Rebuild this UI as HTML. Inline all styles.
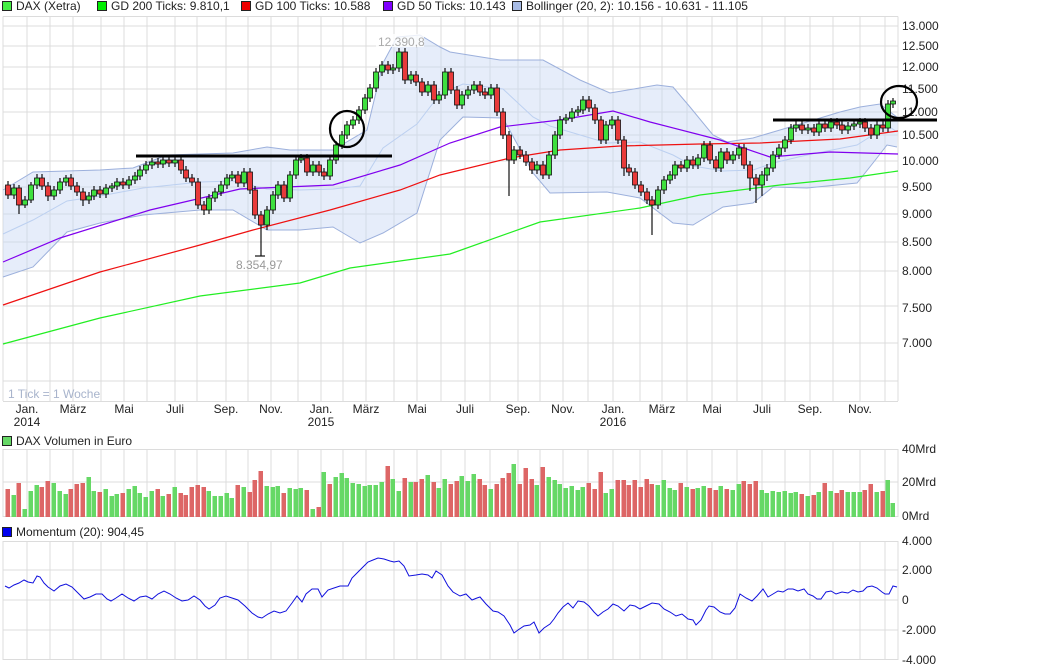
<!DOCTYPE html>
<html><head><meta charset="utf-8">
<style>
html,body{margin:0;padding:0;background:#fff;width:1054px;height:670px;overflow:hidden}
svg{display:block}
text{font-family:"Liberation Sans",sans-serif;font-size:12px;fill:#222}
.g{fill:#3ee03e;stroke:#111;stroke-width:.8}
.r{fill:#e83a3a;stroke:#111;stroke-width:.8}
.vg{fill:#66d866}.vr{fill:#dd6666}
</style></head><body>
<svg width="1054" height="670" viewBox="0 0 1054 670" xmlns="http://www.w3.org/2000/svg">
<defs>
<path id="vg" d="M3 0V1M27 0V1M50 0V1M73 0V1M101 0V1M124 0V1M147 0V1M175 0V1M197 0V1M226 0V1M248 0V1M271 0V1M298 0V1M321 0V1M343 0V1M366 0V1M394 0V1M417 0V1M441 0V1M465 0V1M490 0V1M518 0V1M540 0V1M563 0V1M588 0V1M613 0V1M640 0V1M662 0V1M687 0V1M712 0V1M737 0V1M762 0V1M785 0V1M810 0V1M833 0V1M860 0V1M885 0V1M898 0V1" stroke="#dcdcdc" stroke-width="1" vector-effect="non-scaling-stroke" fill="none"/>
</defs>
<!-- legend -->
<rect x="2.5" y="1.5" width="9" height="9" fill="#44ee44" stroke="#222"/><text x="16" y="10">DAX (Xetra)</text>
<rect x="97.5" y="1.5" width="9" height="9" fill="#00ee00" stroke="#222"/><text x="111" y="10">GD 200 Ticks: 9.810,1</text>
<rect x="241.5" y="1.5" width="9" height="9" fill="#ee0000" stroke="#222"/><text x="255" y="10">GD 100 Ticks: 10.588</text>
<rect x="383.5" y="1.5" width="9" height="9" fill="#8000ff" stroke="#222"/><text x="397" y="10">GD 50 Ticks: 10.143</text>
<rect x="512.5" y="1.5" width="9" height="9" fill="#a8bce6" stroke="#222"/><text x="526" y="10">Bollinger (20, 2): 10.156 - 10.631 - 11.105</text>

<!-- main grid -->
<use href="#vg" transform="translate(0,16.5) scale(1,384.5)"/>
<path d="M3 16.5H898M3 26H898M3 46H898M3 67H898M3 89H898M3 112H898M3 135H898M3 161H898M3 187H898M3 214H898M3 242H898M3 271H898M3 306H898M3 343H898M3 381H898M3 401.5H898" stroke="#dcdcdc" fill="none"/>
<g>
<text x="902" y="30">13.000</text><text x="902" y="50">12.500</text><text x="902" y="71">12.000</text><text x="902" y="93">11.500</text><text x="902" y="116">11.000</text><text x="902" y="139">10.500</text><text x="902" y="165">10.000</text><text x="902" y="191">9.500</text><text x="902" y="218">9.000</text><text x="902" y="246">8.500</text><text x="902" y="275">8.000</text><text x="902" y="312">7.500</text><text x="902" y="347">7.000</text>
</g>
<!-- bollinger -->
<polygon points="3,190 33,172 100,170 133,168 167,155 233,153 267,147 290,150 333,150 367,130 383,63 397,37 420,35 440,47 450,52 500,60 543,60 580,80 610,93 657,85 673,87 690,107 713,135 727,142 753,138 807,122 840,112 860,107 880,104 898,118 897,147 887,145 873,163 857,183 807,188 773,187 753,203 723,207 693,225 673,223 640,198 607,192 550,193 533,173 503,118 463,117 440,140 417,213 383,233 360,243 333,227 300,230 267,230 233,210 200,210 143,215 100,223 67,232 33,267 3,277" fill="rgba(200,216,245,0.45)" stroke="none"/>
<polyline points="3,190 33,172 100,170 133,168 167,155 233,153 267,147 290,150 333,150 367,130 383,63 397,37 420,35 440,47 450,52 500,60 543,60 580,80 610,93 657,85 673,87 690,107 713,135 727,142 753,138 807,122 840,112 860,107 880,104 898,118" fill="none" stroke="#9cb0dc"/>
<polyline points="3,277 33,267 67,232 100,223 143,215 200,210 233,210 267,230 300,230 333,227 360,243 383,233 417,213 440,140 463,117 503,118 533,173 550,193 607,192 640,198 673,223 693,225 723,207 753,203 773,187 807,188 857,183 873,163 887,145 897,147" fill="none" stroke="#9cb0dc"/>
<polyline points="3,234 33,220 67,201 100,196 143,188 200,182 233,181 267,189 300,190 333,189 360,186 383,148 417,124 440,94 463,84 503,89 533,117 550,126 607,143 640,142 673,155 693,166 723,171 753,170 773,163 807,155 857,145 873,135 887,125 897,132" fill="none" stroke="#bcd0f0"/>
<!-- MAs -->
<polyline points="3,344 100,318 200,296 300,283 350,268 450,254 540,222 640,208 700,195 780,185 850,178 898,171" fill="none" stroke="#22ee22" stroke-width="1.2"/>
<polyline points="3,305 100,272 200,245 253,230 330,210 400,190 440,175 510,158 560,150 620,146 700,144 760,143 840,139 898,131" fill="none" stroke="#ee1111" stroke-width="1.2"/>
<polyline points="3,262 60,238 150,210 240,189 333,185 400,165 450,143 500,127 560,120 613,111 650,122 720,140 770,157 830,152 898,154" fill="none" stroke="#8000ee" stroke-width="1.2"/>
<!-- wicks -->
<path stroke="#111" stroke-width="1.2" fill="none" d="M8 181V199M14 184V199M19 185V214M25 196V208M31 182V203M37 174V189M42 174V190M48 182V201M54 186V200M60 178V194M66 175V186M71 174V190M77 182V196M83 188V206M89 192V204M94 186V200M100 186V198M106 184V198M112 183V192M117 178V190M123 178V189M129 176V189M135 172V184M140 166V180M146 161V174M152 158V169M158 158V168M163 156V168M169 156V167M175 156V167M181 156V174M186 166V182M192 174V186M198 178V209M204 201V215M209 194V214M215 188V202M221 181V196M227 174V189M232 171V181M238 171V187M244 168V187M250 168V194M255 186V219M261 211V256M267 206V230M273 191V214M278 181V199M284 181V202M290 171V202M296 156V179M301 154V163M307 154V176M313 161V176M319 161V176M324 168V180M330 156V180M336 141V164M342 131V149M347 121V139M353 116V129M359 106V124M365 94V114M370 84V102M376 68V92M382 61V76M388 61V74M393 64V74M399 48V72M405 48V84M411 71V84M416 71V86M422 78V96M428 81V96M434 81V104M439 91V104M445 68V99M451 68V94M457 86V109M462 91V109M468 86V99M474 81V94M480 81V96M485 88V99M491 84V99M497 84V116M503 108V139M509 131V196M514 146V164M520 146V159M526 151V166M532 158V174M537 161V174M543 161V179M549 151V179M555 131V159M560 116V139M566 114V124M572 108V122M578 106V116M583 96V114M589 96V112M595 104V124M601 116V144M606 121V144M612 116V129M618 116V144M624 136V176M629 164V176M635 168V189M641 181V196M647 188V204M652 196V235M658 186V209M664 176V194M670 171V184M675 161V179M681 161V172M687 156V172M693 156V169M698 154V169M704 141V162M710 141V164M716 156V172M721 148V172M727 148V164M733 151V164M739 144V159M744 144V169M750 161V191M756 174V203M762 171V196M767 164V181M773 151V172M779 144V159M785 136V152M791 124V144M796 121V132M802 121V134M808 124V134M814 124V136M819 120V136M825 120V132M831 118V132M837 118V129M842 121V134M848 122V134M854 120V130M860 118V128M865 118V132M871 124V139M877 121V139M883 121V132M888 100V132M893 98V108"/>
<!-- bodies -->
<g>
<rect class="r" x="5.5" y="185" width="5" height="10"/><rect class="g" x="11.5" y="188" width="5" height="7"/><rect class="r" x="16.5" y="188" width="5" height="17"/><rect class="g" x="22.5" y="200" width="5" height="5"/><rect class="g" x="28.5" y="185" width="5" height="15"/><rect class="g" x="34.5" y="178" width="5" height="7"/><rect class="r" x="39.5" y="178" width="5" height="8"/><rect class="r" x="45.5" y="186" width="5" height="10"/><rect class="g" x="51.5" y="190" width="5" height="6"/><rect class="g" x="57.5" y="182" width="5" height="8"/><rect class="g" x="63.5" y="178" width="5" height="4"/><rect class="r" x="68.5" y="178" width="5" height="8"/><rect class="r" x="74.5" y="186" width="5" height="6"/><rect class="r" x="80.5" y="192" width="5" height="8"/><rect class="g" x="86.5" y="196" width="5" height="4"/><rect class="g" x="91.5" y="190" width="5" height="6"/><rect class="r" x="97.5" y="190" width="5" height="4"/><rect class="g" x="103.5" y="188" width="5" height="6"/><rect class="g" x="109.5" y="186" width="5" height="2"/><rect class="g" x="114.5" y="182" width="5" height="4"/><rect class="r" x="120.5" y="182" width="5" height="3"/><rect class="g" x="126.5" y="180" width="5" height="5"/><rect class="g" x="132.5" y="176" width="5" height="4"/><rect class="g" x="137.5" y="170" width="5" height="6"/><rect class="g" x="143.5" y="165" width="5" height="5"/><rect class="g" x="149.5" y="162" width="5" height="3"/><rect class="r" x="155.5" y="162" width="5" height="2"/><rect class="g" x="160.5" y="160" width="5" height="4"/><rect class="r" x="166.5" y="160" width="5" height="3"/><rect class="g" x="172.5" y="160" width="5" height="3"/><rect class="r" x="178.5" y="160" width="5" height="10"/><rect class="r" x="183.5" y="170" width="5" height="8"/><rect class="r" x="189.5" y="178" width="5" height="4"/><rect class="r" x="195.5" y="182" width="5" height="23"/><rect class="r" x="201.5" y="205" width="5" height="5"/><rect class="g" x="206.5" y="198" width="5" height="12"/><rect class="g" x="212.5" y="192" width="5" height="6"/><rect class="g" x="218.5" y="185" width="5" height="7"/><rect class="g" x="224.5" y="178" width="5" height="7"/><rect class="g" x="229.5" y="175" width="5" height="3"/><rect class="r" x="235.5" y="175" width="5" height="8"/><rect class="g" x="241.5" y="172" width="5" height="11"/><rect class="r" x="247.5" y="172" width="5" height="18"/><rect class="r" x="252.5" y="190" width="5" height="25"/><rect class="r" x="258.5" y="215" width="5" height="10"/><rect class="g" x="264.5" y="210" width="5" height="15"/><rect class="g" x="270.5" y="195" width="5" height="15"/><rect class="g" x="275.5" y="185" width="5" height="10"/><rect class="r" x="281.5" y="185" width="5" height="13"/><rect class="g" x="287.5" y="175" width="5" height="23"/><rect class="g" x="293.5" y="160" width="5" height="15"/><rect class="g" x="298.5" y="158" width="5" height="2"/><rect class="r" x="304.5" y="158" width="5" height="14"/><rect class="g" x="310.5" y="165" width="5" height="7"/><rect class="r" x="316.5" y="165" width="5" height="7"/><rect class="r" x="321.5" y="172" width="5" height="4"/><rect class="g" x="327.5" y="160" width="5" height="16"/><rect class="g" x="333.5" y="145" width="5" height="15"/><rect class="g" x="339.5" y="135" width="5" height="10"/><rect class="g" x="344.5" y="125" width="5" height="10"/><rect class="g" x="350.5" y="120" width="5" height="5"/><rect class="g" x="356.5" y="110" width="5" height="10"/><rect class="g" x="362.5" y="98" width="5" height="12"/><rect class="g" x="367.5" y="88" width="5" height="10"/><rect class="g" x="373.5" y="72" width="5" height="16"/><rect class="g" x="379.5" y="65" width="5" height="7"/><rect class="r" x="385.5" y="65" width="5" height="5"/><rect class="g" x="390.5" y="68" width="5" height="2"/><rect class="g" x="396.5" y="52" width="5" height="16"/><rect class="r" x="402.5" y="52" width="5" height="28"/><rect class="g" x="408.5" y="75" width="5" height="5"/><rect class="r" x="413.5" y="75" width="5" height="7"/><rect class="r" x="419.5" y="82" width="5" height="10"/><rect class="g" x="425.5" y="85" width="5" height="7"/><rect class="r" x="431.5" y="85" width="5" height="15"/><rect class="g" x="436.5" y="95" width="5" height="5"/><rect class="g" x="442.5" y="72" width="5" height="23"/><rect class="r" x="448.5" y="72" width="5" height="18"/><rect class="r" x="454.5" y="90" width="5" height="15"/><rect class="g" x="459.5" y="95" width="5" height="10"/><rect class="g" x="465.5" y="90" width="5" height="5"/><rect class="g" x="471.5" y="85" width="5" height="5"/><rect class="r" x="477.5" y="85" width="5" height="7"/><rect class="r" x="482.5" y="92" width="5" height="3"/><rect class="g" x="488.5" y="88" width="5" height="7"/><rect class="r" x="494.5" y="88" width="5" height="24"/><rect class="r" x="500.5" y="112" width="5" height="23"/><rect class="r" x="506.5" y="135" width="5" height="25"/><rect class="g" x="511.5" y="150" width="5" height="10"/><rect class="r" x="517.5" y="150" width="5" height="5"/><rect class="r" x="523.5" y="155" width="5" height="7"/><rect class="r" x="529.5" y="162" width="5" height="8"/><rect class="g" x="534.5" y="165" width="5" height="5"/><rect class="r" x="540.5" y="165" width="5" height="10"/><rect class="g" x="546.5" y="155" width="5" height="20"/><rect class="g" x="552.5" y="135" width="5" height="20"/><rect class="g" x="557.5" y="120" width="5" height="15"/><rect class="g" x="563.5" y="118" width="5" height="2"/><rect class="g" x="569.5" y="112" width="5" height="6"/><rect class="g" x="575.5" y="110" width="5" height="2"/><rect class="g" x="580.5" y="100" width="5" height="10"/><rect class="r" x="586.5" y="100" width="5" height="8"/><rect class="r" x="592.5" y="108" width="5" height="12"/><rect class="r" x="598.5" y="120" width="5" height="20"/><rect class="g" x="603.5" y="125" width="5" height="15"/><rect class="g" x="609.5" y="120" width="5" height="5"/><rect class="r" x="615.5" y="120" width="5" height="20"/><rect class="r" x="621.5" y="140" width="5" height="28"/><rect class="r" x="626.5" y="168" width="5" height="4"/><rect class="r" x="632.5" y="172" width="5" height="13"/><rect class="r" x="638.5" y="185" width="5" height="7"/><rect class="r" x="644.5" y="192" width="5" height="8"/><rect class="r" x="649.5" y="200" width="5" height="5"/><rect class="g" x="655.5" y="190" width="5" height="15"/><rect class="g" x="661.5" y="180" width="5" height="10"/><rect class="g" x="667.5" y="175" width="5" height="5"/><rect class="g" x="672.5" y="165" width="5" height="10"/><rect class="r" x="678.5" y="165" width="5" height="3"/><rect class="g" x="684.5" y="160" width="5" height="8"/><rect class="r" x="690.5" y="160" width="5" height="5"/><rect class="g" x="695.5" y="158" width="5" height="7"/><rect class="g" x="701.5" y="145" width="5" height="13"/><rect class="r" x="707.5" y="145" width="5" height="15"/><rect class="r" x="713.5" y="160" width="5" height="8"/><rect class="g" x="718.5" y="152" width="5" height="16"/><rect class="r" x="724.5" y="152" width="5" height="8"/><rect class="g" x="730.5" y="155" width="5" height="5"/><rect class="g" x="736.5" y="148" width="5" height="7"/><rect class="r" x="741.5" y="148" width="5" height="17"/><rect class="r" x="747.5" y="165" width="5" height="13"/><rect class="r" x="753.5" y="178" width="5" height="7"/><rect class="g" x="759.5" y="175" width="5" height="10"/><rect class="g" x="764.5" y="168" width="5" height="7"/><rect class="g" x="770.5" y="155" width="5" height="13"/><rect class="g" x="776.5" y="148" width="5" height="7"/><rect class="g" x="782.5" y="140" width="5" height="8"/><rect class="g" x="788.5" y="128" width="5" height="12"/><rect class="g" x="793.5" y="125" width="5" height="3"/><rect class="r" x="799.5" y="125" width="5" height="5"/><rect class="g" x="805.5" y="128" width="5" height="2"/><rect class="r" x="811.5" y="128" width="5" height="4"/><rect class="g" x="816.5" y="124" width="5" height="8"/><rect class="r" x="822.5" y="124" width="5" height="4"/><rect class="g" x="828.5" y="122" width="5" height="6"/><rect class="r" x="834.5" y="122" width="5" height="3"/><rect class="r" x="839.5" y="125" width="5" height="5"/><rect class="g" x="845.5" y="126" width="5" height="4"/><rect class="g" x="851.5" y="124" width="5" height="2"/><rect class="g" x="857.5" y="122" width="5" height="2"/><rect class="r" x="862.5" y="122" width="5" height="6"/><rect class="r" x="868.5" y="128" width="5" height="7"/><rect class="g" x="874.5" y="125" width="5" height="10"/><rect class="r" x="880.5" y="125" width="5" height="3"/><rect class="g" x="885.5" y="104" width="5" height="24"/><rect class="g" x="890.5" y="101" width="5" height="3"/>
</g>
<path d="M255 256H265" stroke="#111" stroke-width="1.2"/>
<!-- annotations -->
<rect x="376" y="34" width="48" height="13" fill="#fff" opacity="0.8"/>
<text x="378" y="46" fill="#aaa" style="fill:#aaa">12.390,8</text>
<text x="236" y="269" style="fill:#999">8.354,97</text>
<text x="8" y="398" style="fill:#a8b4cc">1 Tick = 1 Woche</text>
<path d="M136 156H392M773 120H937" stroke="#000" stroke-width="3"/>
<ellipse cx="347" cy="129" rx="17" ry="18" fill="none" stroke="#000" stroke-width="2.2"/>
<ellipse cx="899" cy="102" rx="18" ry="16" fill="none" stroke="#000" stroke-width="2.2"/>
<!-- x labels -->
<g text-anchor="middle">
<text x="27" y="413">Jan.</text><text x="73" y="413">März</text><text x="124" y="413">Mai</text><text x="175" y="413">Juli</text><text x="226" y="413">Sep.</text><text x="271" y="413">Nov.</text><text x="321" y="413">Jan.</text><text x="366" y="413">März</text><text x="417" y="413">Mai</text><text x="465" y="413">Juli</text><text x="518" y="413">Sep.</text><text x="563" y="413">Nov.</text><text x="613" y="413">Jan.</text><text x="662" y="413">März</text><text x="712" y="413">Mai</text><text x="762" y="413">Juli</text><text x="810" y="413">Sep.</text><text x="860" y="413">Nov.</text>
<text x="27" y="426">2014</text><text x="321" y="426">2015</text><text x="613" y="426">2016</text>
</g>
<!-- volume -->
<rect x="2.5" y="436.5" width="9" height="9" fill="#66d866" stroke="#222"/><text x="16" y="445">DAX Volumen in Euro</text>
<use href="#vg" transform="translate(0,449) scale(1,68)"/>
<path d="M3 449.5H898M3 482H898M3 516.5H898" stroke="#dcdcdc"/>
<text x="902" y="453">40Mrd</text><text x="902" y="486">20Mrd</text><text x="902" y="520">0Mrd</text>
<g>
<rect class="vr" x="5.5" y="489" width="4.5" height="28"/><rect class="vg" x="11.5" y="495" width="4.5" height="22"/><rect class="vr" x="16.5" y="483" width="4.5" height="34"/><rect class="vg" x="22.5" y="509" width="4.5" height="8"/><rect class="vg" x="28.5" y="491" width="4.5" height="26"/><rect class="vg" x="34.5" y="485" width="4.5" height="32"/><rect class="vr" x="39.5" y="487" width="4.5" height="30"/><rect class="vr" x="45.5" y="481" width="4.5" height="36"/><rect class="vg" x="51.5" y="483" width="4.5" height="34"/><rect class="vg" x="57.5" y="491" width="4.5" height="26"/><rect class="vg" x="63.5" y="494" width="4.5" height="23"/><rect class="vr" x="68.5" y="489" width="4.5" height="28"/><rect class="vr" x="74.5" y="484" width="4.5" height="33"/><rect class="vr" x="80.5" y="483" width="4.5" height="34"/><rect class="vg" x="86.5" y="477" width="4.5" height="40"/><rect class="vg" x="91.5" y="491" width="4.5" height="26"/><rect class="vr" x="97.5" y="492" width="4.5" height="25"/><rect class="vg" x="103.5" y="489" width="4.5" height="28"/><rect class="vg" x="109.5" y="496" width="4.5" height="21"/><rect class="vg" x="114.5" y="494" width="4.5" height="23"/><rect class="vr" x="120.5" y="493" width="4.5" height="24"/><rect class="vg" x="126.5" y="489" width="4.5" height="28"/><rect class="vg" x="132.5" y="486" width="4.5" height="31"/><rect class="vg" x="137.5" y="493" width="4.5" height="24"/><rect class="vg" x="143.5" y="497" width="4.5" height="20"/><rect class="vg" x="149.5" y="491" width="4.5" height="26"/><rect class="vr" x="155.5" y="489" width="4.5" height="28"/><rect class="vg" x="160.5" y="496" width="4.5" height="21"/><rect class="vr" x="166.5" y="494" width="4.5" height="23"/><rect class="vg" x="172.5" y="487" width="4.5" height="30"/><rect class="vr" x="178.5" y="493" width="4.5" height="24"/><rect class="vr" x="183.5" y="495" width="4.5" height="22"/><rect class="vr" x="189.5" y="487" width="4.5" height="30"/><rect class="vr" x="195.5" y="485" width="4.5" height="32"/><rect class="vr" x="201.5" y="487" width="4.5" height="30"/><rect class="vg" x="206.5" y="491" width="4.5" height="26"/><rect class="vg" x="212.5" y="496" width="4.5" height="21"/><rect class="vg" x="218.5" y="496" width="4.5" height="21"/><rect class="vg" x="224.5" y="493" width="4.5" height="24"/><rect class="vg" x="229.5" y="498" width="4.5" height="19"/><rect class="vr" x="235.5" y="485" width="4.5" height="32"/><rect class="vg" x="241.5" y="487" width="4.5" height="30"/><rect class="vr" x="247.5" y="492" width="4.5" height="25"/><rect class="vr" x="252.5" y="480" width="4.5" height="37"/><rect class="vr" x="258.5" y="471" width="4.5" height="46"/><rect class="vg" x="264.5" y="486" width="4.5" height="31"/><rect class="vg" x="270.5" y="487" width="4.5" height="30"/><rect class="vg" x="275.5" y="486" width="4.5" height="31"/><rect class="vr" x="281.5" y="493" width="4.5" height="24"/><rect class="vg" x="287.5" y="488" width="4.5" height="29"/><rect class="vg" x="293.5" y="489" width="4.5" height="28"/><rect class="vg" x="298.5" y="488" width="4.5" height="29"/><rect class="vr" x="304.5" y="490" width="4.5" height="27"/><rect class="vg" x="310.5" y="509" width="4.5" height="8"/><rect class="vr" x="316.5" y="507" width="4.5" height="10"/><rect class="vg" x="321.5" y="472" width="4.5" height="45"/><rect class="vr" x="327.5" y="484" width="4.5" height="33"/><rect class="vg" x="333.5" y="477" width="4.5" height="40"/><rect class="vg" x="339.5" y="473" width="4.5" height="44"/><rect class="vg" x="344.5" y="478" width="4.5" height="39"/><rect class="vg" x="350.5" y="483" width="4.5" height="34"/><rect class="vg" x="356.5" y="484" width="4.5" height="33"/><rect class="vg" x="362.5" y="486" width="4.5" height="31"/><rect class="vg" x="367.5" y="485" width="4.5" height="32"/><rect class="vg" x="373.5" y="485" width="4.5" height="32"/><rect class="vg" x="379.5" y="482" width="4.5" height="35"/><rect class="vr" x="385.5" y="466" width="4.5" height="51"/><rect class="vg" x="390.5" y="479" width="4.5" height="38"/><rect class="vg" x="396.5" y="491" width="4.5" height="26"/><rect class="vr" x="402.5" y="478" width="4.5" height="39"/><rect class="vg" x="408.5" y="482" width="4.5" height="35"/><rect class="vr" x="413.5" y="482" width="4.5" height="35"/><rect class="vr" x="419.5" y="479" width="4.5" height="38"/><rect class="vg" x="425.5" y="475" width="4.5" height="42"/><rect class="vr" x="431.5" y="482" width="4.5" height="35"/><rect class="vg" x="436.5" y="488" width="4.5" height="29"/><rect class="vg" x="442.5" y="479" width="4.5" height="38"/><rect class="vr" x="448.5" y="484" width="4.5" height="33"/><rect class="vr" x="454.5" y="481" width="4.5" height="36"/><rect class="vg" x="459.5" y="476" width="4.5" height="41"/><rect class="vg" x="465.5" y="481" width="4.5" height="36"/><rect class="vg" x="471.5" y="474" width="4.5" height="43"/><rect class="vr" x="477.5" y="479" width="4.5" height="38"/><rect class="vr" x="482.5" y="485" width="4.5" height="32"/><rect class="vg" x="488.5" y="489" width="4.5" height="28"/><rect class="vr" x="494.5" y="484" width="4.5" height="33"/><rect class="vr" x="500.5" y="478" width="4.5" height="39"/><rect class="vr" x="506.5" y="473" width="4.5" height="44"/><rect class="vg" x="511.5" y="464" width="4.5" height="53"/><rect class="vr" x="517.5" y="484" width="4.5" height="33"/><rect class="vr" x="523.5" y="468" width="4.5" height="49"/><rect class="vr" x="529.5" y="479" width="4.5" height="38"/><rect class="vg" x="534.5" y="485" width="4.5" height="32"/><rect class="vr" x="540.5" y="467" width="4.5" height="50"/><rect class="vg" x="546.5" y="477" width="4.5" height="40"/><rect class="vg" x="552.5" y="480" width="4.5" height="37"/><rect class="vg" x="557.5" y="484" width="4.5" height="33"/><rect class="vg" x="563.5" y="488" width="4.5" height="29"/><rect class="vg" x="569.5" y="486" width="4.5" height="31"/><rect class="vg" x="575.5" y="490" width="4.5" height="27"/><rect class="vg" x="580.5" y="487" width="4.5" height="30"/><rect class="vr" x="586.5" y="483" width="4.5" height="34"/><rect class="vr" x="592.5" y="489" width="4.5" height="28"/><rect class="vr" x="598.5" y="472" width="4.5" height="45"/><rect class="vg" x="603.5" y="493" width="4.5" height="24"/><rect class="vg" x="609.5" y="489" width="4.5" height="28"/><rect class="vr" x="615.5" y="480" width="4.5" height="37"/><rect class="vr" x="621.5" y="480" width="4.5" height="37"/><rect class="vr" x="626.5" y="485" width="4.5" height="32"/><rect class="vr" x="632.5" y="480" width="4.5" height="37"/><rect class="vr" x="638.5" y="487" width="4.5" height="30"/><rect class="vr" x="644.5" y="479" width="4.5" height="38"/><rect class="vr" x="649.5" y="484" width="4.5" height="33"/><rect class="vg" x="655.5" y="485" width="4.5" height="32"/><rect class="vg" x="661.5" y="480" width="4.5" height="37"/><rect class="vg" x="667.5" y="488" width="4.5" height="29"/><rect class="vg" x="672.5" y="490" width="4.5" height="27"/><rect class="vr" x="678.5" y="483" width="4.5" height="34"/><rect class="vg" x="684.5" y="487" width="4.5" height="30"/><rect class="vr" x="690.5" y="489" width="4.5" height="28"/><rect class="vg" x="695.5" y="488" width="4.5" height="29"/><rect class="vg" x="701.5" y="486" width="4.5" height="31"/><rect class="vr" x="707.5" y="488" width="4.5" height="29"/><rect class="vr" x="713.5" y="490" width="4.5" height="27"/><rect class="vg" x="718.5" y="486" width="4.5" height="31"/><rect class="vr" x="724.5" y="489" width="4.5" height="28"/><rect class="vg" x="730.5" y="490" width="4.5" height="27"/><rect class="vg" x="736.5" y="484" width="4.5" height="33"/><rect class="vr" x="741.5" y="481" width="4.5" height="36"/><rect class="vr" x="747.5" y="484" width="4.5" height="33"/><rect class="vr" x="753.5" y="481" width="4.5" height="36"/><rect class="vg" x="759.5" y="490" width="4.5" height="27"/><rect class="vg" x="764.5" y="493" width="4.5" height="24"/><rect class="vg" x="770.5" y="491" width="4.5" height="26"/><rect class="vg" x="776.5" y="492" width="4.5" height="25"/><rect class="vg" x="782.5" y="491" width="4.5" height="26"/><rect class="vg" x="788.5" y="493" width="4.5" height="24"/><rect class="vg" x="793.5" y="492" width="4.5" height="25"/><rect class="vr" x="799.5" y="494" width="4.5" height="23"/><rect class="vg" x="805.5" y="496" width="4.5" height="21"/><rect class="vr" x="811.5" y="495" width="4.5" height="22"/><rect class="vg" x="816.5" y="492" width="4.5" height="25"/><rect class="vr" x="822.5" y="483" width="4.5" height="34"/><rect class="vg" x="828.5" y="491" width="4.5" height="26"/><rect class="vr" x="834.5" y="493" width="4.5" height="24"/><rect class="vr" x="839.5" y="490" width="4.5" height="27"/><rect class="vg" x="845.5" y="492" width="4.5" height="25"/><rect class="vg" x="851.5" y="492" width="4.5" height="25"/><rect class="vg" x="857.5" y="492" width="4.5" height="25"/><rect class="vr" x="862.5" y="490" width="4.5" height="27"/><rect class="vr" x="868.5" y="484" width="4.5" height="33"/><rect class="vg" x="874.5" y="492" width="4.5" height="25"/><rect class="vr" x="880.5" y="491" width="4.5" height="26"/><rect class="vg" x="885.5" y="480" width="4.5" height="37"/><rect class="vg" x="890.5" y="503" width="4.5" height="14"/>
</g>
<!-- momentum -->
<rect x="2.5" y="527.5" width="9" height="9" fill="#0000ee" stroke="#222"/><text x="16" y="536">Momentum (20): 904,45</text>
<use href="#vg" transform="translate(0,541) scale(1,119)"/>
<path d="M3 541.5H898M3 570H898M3 600H898M3 630H898M3 659.5H898" stroke="#dcdcdc"/>
<text x="902" y="545">4.000</text><text x="902" y="574">2.000</text><text x="902" y="604">0</text><text x="902" y="634">-2.000</text><text x="902" y="664">-4.000</text>
<polyline fill="none" stroke="#1010dd" stroke-width="1" points="5,586 9,588 14,585 19,583 24,580 28,582 33,583 37,576 40,577 44,583 48,587 54,591 60,586 66,584 72,587 78,593 84,599 90,597 96,594 102,594 107,599 111,601 116,598 122,594 128,598 134,601 140,597 146,596 152,599 158,594 164,591 170,594 176,598 182,601 188,600 194,596 200,600 205,606 209,609 215,605 220,598 226,596 232,598 238,600 245,606 252,613 258,617 262,618 268,614 274,611 280,613 286,611 292,603 297,596 302,602 306,594 312,589 318,589 322,597 328,590 334,588 340,586 348,586 352,578 358,572 364,566 368,562 373,560 378,558 384,559 390,561 394,562 399,561 404,566 409,576 416,575 422,574 428,575 432,578 436,571 442,575 448,586 453,592 460,596 466,594 472,600 477,598 480,597 486,604 493,611 498,612 504,616 510,625 514,633 518,630 524,626 530,625 534,622 539,633 544,628 550,624 554,619 558,613 563,607 568,603 573,608 578,601 584,602 589,606 594,612 598,616 603,612 608,609 613,604 618,606 624,611 630,605 635,606 640,609 646,606 652,603 659,604 664,609 670,612 676,616 682,614 688,619 693,620 696,625 701,620 706,610 709,606 714,607 720,612 725,614 730,614 735,608 740,594 746,598 752,601 757,596 763,589 768,597 773,594 778,591 783,592 788,589 793,589 798,591 804,589 808,594 813,596 817,599 821,599 826,592 831,591 836,594 842,592 848,593 853,590 858,592 863,591 867,587 872,586 877,588 882,592 885,594 889,594 893,586 897,587"/>
</svg>
</body></html>
